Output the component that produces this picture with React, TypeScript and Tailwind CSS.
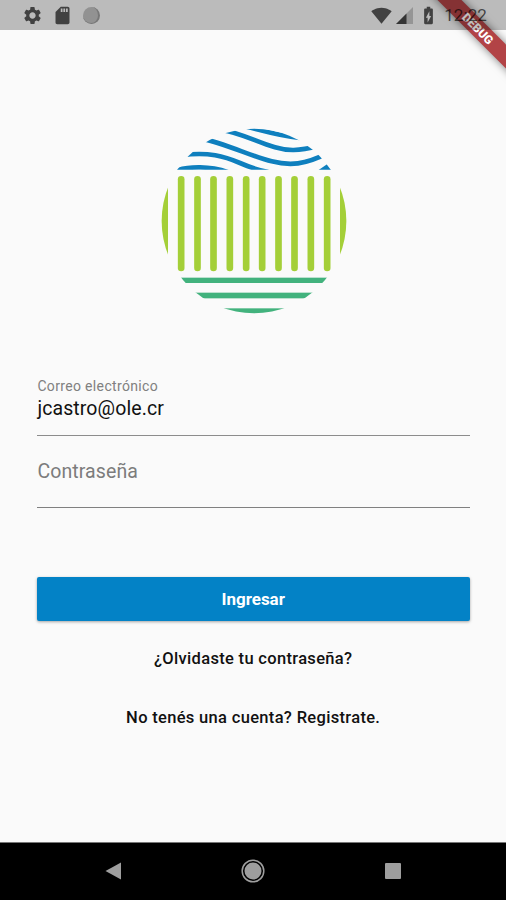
import React from "react";
import {
  MdBatteryChargingFull,
  MdSdCard,
  MdSettings,
  MdSignalWifi4Bar,
} from "react-icons/md";

function StatusBar() {
  return (
    <div className="relative z-20 h-[30px] shrink-0 bg-black/25 flex items-center justify-between pl-[22px] pr-[19px] text-black/65">
      <div className="flex items-center gap-[9px]">
        <MdSettings size={21} />
        <MdSdCard size={21} />
        <div className="ml-px h-[17px] w-[17px] rounded-full bg-[#929292] border-r-2 border-b border-[#777]"></div>
      </div>
      <div className="flex items-center">
        <MdSignalWifi4Bar size={21} />
        <svg className="ml-[4px]" width="17" height="17" viewBox="0 0 17 17">
          <path d="M0 17L17 0V17Z" fill="#000" fillOpacity="0.2" />
          <path d="M0 17L10.5 6.5V17Z" fill="currentColor" />
        </svg>
        <MdBatteryChargingFull className="ml-[5px]" size={21} />
        <span className="ml-[5px] text-[17px] leading-none tracking-[0.1px]">12:22</span>
      </div>
    </div>
  );
}

function DebugBanner() {
  return (
    <div className="absolute top-0 right-0 z-10 h-[90px] w-[90px] overflow-hidden">
      <div className="absolute top-[20px] left-[2px] flex h-[17px] w-[120px] rotate-45 items-center justify-center bg-[#b24346] shadow-[0_0_9px_rgba(0,0,0,0.5)]">
        <span className="text-[12px] font-black leading-none text-white">DEBUG</span>
      </div>
    </div>
  );
}

function Logo() {
  const bars = [93, 142, 190, 239, 288, 336, 385, 433, 482, 531];

  return (
    <svg width="210" height="200" viewBox="0 0 630 600">
      <defs>
        <clipPath id="disc">
          <circle cx="312" cy="303" r="277" />
        </clipPath>
        <clipPath id="sky">
          <rect width="630" height="149" />
        </clipPath>
      </defs>
      <g clipPath="url(#disc)">
        <g clipPath="url(#sky)" fill="none" stroke="#0e7fbe" strokeWidth="14">
          <path d="M75 153C118 138 180 138 235 157" />
          <path d="M95 106C175 94 225 110 270 129C300 142 325 151 355 156" />
          <path d="M150 55C225 69 300 108 365 124C420 138 465 134 530 101" />
          <path d="M215 30C270 38 320 66 375 82C412 93 445 93 505 79" />
          <path d="M290 20C340 32 380 46 450 54" />
          <path d="M500 154L531 133L550 154Z" fill="#0e7fbe" stroke="none" />
        </g>
        <g fill="#a4cf38">
          <rect x="20" y="190" width="34" height="220" />
          <rect x="570" y="190" width="34" height="220" />
        </g>
        <g fill="#42b27d">
          <rect x="50" y="473" width="530" height="16" />
          <rect x="50" y="518" width="530" height="17" />
          <rect x="50" y="565" width="530" height="30" />
        </g>
      </g>
      {bars.map((x) => (
        <rect key={x} x={x - 9.5} y="168" width="20" height="286" rx="10" fill="#a4cf38" />
      ))}
    </svg>
  );
}

function NavigationBar() {
  return (
    <div className="h-[58px] shrink-0 bg-black border-t border-[#777] flex items-center justify-between pb-[2px] pl-[105px] pr-[105px]">
      <svg width="16" height="18" viewBox="0 0 16 18">
        <path d="M0.5 9L16 0.5V17.5Z" fill="#9e9e9e" />
      </svg>
      <svg width="24" height="24" viewBox="0 0 24 24">
        <circle cx="12" cy="12" r="10.8" fill="none" stroke="#9e9e9e" strokeWidth="1.5" />
        <circle cx="12" cy="12" r="8.5" fill="#9e9e9e" />
      </svg>
      <div className="h-4 w-4 rounded-[1px] bg-[#9e9e9e]"></div>
    </div>
  );
}

function App() {
  return (
    <div className="relative w-full h-screen flex flex-col overflow-hidden bg-[#fafafa] font-['Roboto',sans-serif] text-[#111]">
      <StatusBar />
      <DebugBanner />
      <div className="flex-1 flex flex-col pl-[37.4px] pr-[36px]">
        <div className="mt-[90px] flex justify-center pl-[2.6px]">
          <Logo />
        </div>

        <div className="mt-[57px] h-[59px] border-b border-[#8c8c8c]">
          <p className="text-[14px] leading-[18px] tracking-[0.34px] text-[#808080]">
            Correo electrónico
          </p>
          <p className="text-[19.5px] leading-[28px] tracking-[0.1px]">jcastro@ole.cr</p>
        </div>
        <div className="h-[72px] border-b border-[#808080] pt-[22px]">
          <p className="text-[19.5px] leading-[28px] tracking-[0.1px] text-[#7c7c7c]">Contraseña</p>
        </div>

        <button className="mt-[69px] h-[44px] pt-px pr-px rounded-[2px] bg-[#0382c6] text-[17px] font-bold text-white shadow-[0_1px_3px_rgba(0,0,0,0.35)]">
          Ingresar
        </button>
        <p className="mt-[26px] pr-px text-center text-[16.5px] leading-6 font-medium tracking-[0.32px]">
          ¿Olvidaste tu contraseña?
        </p>
        <p className="mt-[35px] pr-px text-center text-[16.5px] leading-6 font-medium tracking-[0.32px]">
          No tenés una cuenta? Registrate.
        </p>
      </div>
      <NavigationBar />
    </div>
  );
}

export default App;
